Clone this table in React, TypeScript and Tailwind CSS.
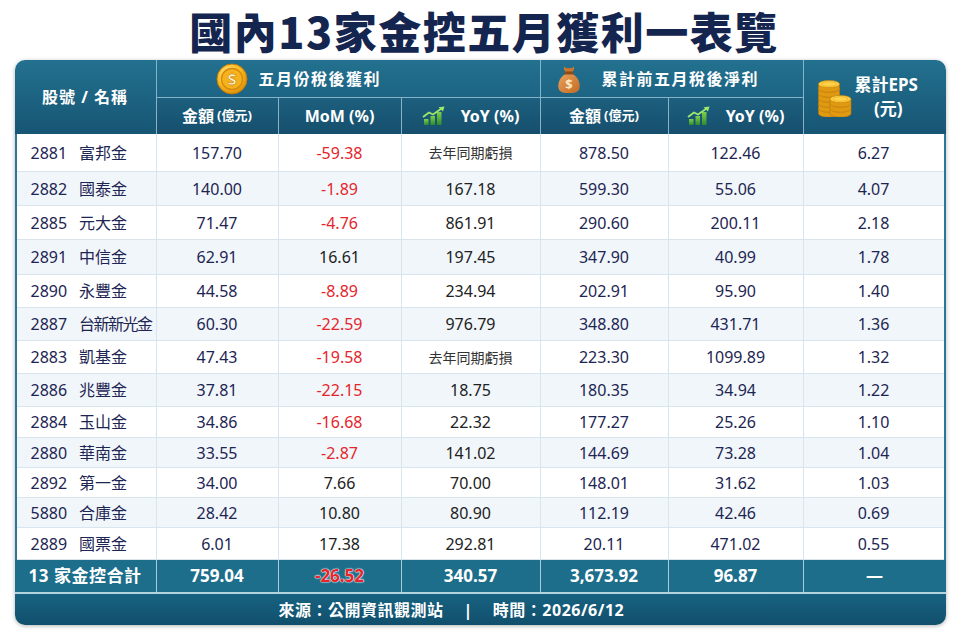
import React from "react";

type Row = {
  code: string;
  name: string;
  amt: string;
  mom: string;
  yoy: string;
  cum: string;
  cumYoy: string;
  eps: string;
  h: string;
};

const rows: Row[] = [
  { code: "2881", name: "富邦金", amt: "157.70", mom: "-59.38", yoy: "去年同期虧損", cum: "878.50", cumYoy: "122.46", eps: "6.27", h: "h-[38px]" },
  { code: "2882", name: "國泰金", amt: "140.00", mom: "-1.89", yoy: "167.18", cum: "599.30", cumYoy: "55.06", eps: "4.07", h: "h-[34px]" },
  { code: "2885", name: "元大金", amt: "71.47", mom: "-4.76", yoy: "861.91", cum: "290.60", cumYoy: "200.11", eps: "2.18", h: "h-[34px]" },
  { code: "2891", name: "中信金", amt: "62.91", mom: "16.61", yoy: "197.45", cum: "347.90", cumYoy: "40.99", eps: "1.78", h: "h-[35px]" },
  { code: "2890", name: "永豐金", amt: "44.58", mom: "-8.89", yoy: "234.94", cum: "202.91", cumYoy: "95.90", eps: "1.40", h: "h-[33px]" },
  { code: "2887", name: "台新新光金", amt: "60.30", mom: "-22.59", yoy: "976.79", cum: "348.80", cumYoy: "431.71", eps: "1.36", h: "h-[33px]" },
  { code: "2883", name: "凱基金", amt: "47.43", mom: "-19.58", yoy: "去年同期虧損", cum: "223.30", cumYoy: "1099.89", eps: "1.32", h: "h-[33px]" },
  { code: "2886", name: "兆豐金", amt: "37.81", mom: "-22.15", yoy: "18.75", cum: "180.35", cumYoy: "34.94", eps: "1.22", h: "h-[33px]" },
  { code: "2884", name: "玉山金", amt: "34.86", mom: "-16.68", yoy: "22.32", cum: "177.27", cumYoy: "25.26", eps: "1.10", h: "h-[31px]" },
  { code: "2880", name: "華南金", amt: "33.55", mom: "-2.87", yoy: "141.02", cum: "144.69", cumYoy: "73.28", eps: "1.04", h: "h-[30px]" },
  { code: "2892", name: "第一金", amt: "34.00", mom: "7.66", yoy: "70.00", cum: "148.01", cumYoy: "31.62", eps: "1.03", h: "h-[30px]" },
  { code: "5880", name: "合庫金", amt: "28.42", mom: "10.80", yoy: "80.90", cum: "112.19", cumYoy: "42.46", eps: "0.69", h: "h-[30px]" },
  { code: "2889", name: "國票金", amt: "6.01", mom: "17.38", yoy: "292.81", cum: "20.11", cumYoy: "471.02", eps: "0.55", h: "h-[32px]" },
];

function Coin() {
  return (
    <svg width="32" height="32" viewBox="0 0 32 32">
      <defs>
        <radialGradient id="coinG" cx="38%" cy="32%" r="75%">
          <stop offset="0" stopColor="#ffe889" />
          <stop offset="0.55" stopColor="#f9bb22" />
          <stop offset="1" stopColor="#d98806" />
        </radialGradient>
      </defs>
      <circle cx="16" cy="16" r="15" fill="url(#coinG)" stroke="#c47a05" strokeWidth="1" />
      <circle cx="16" cy="16" r="10.5" fill="#f6b21c" stroke="#d58b0c" strokeWidth="1.4" />
      <text x="16" y="21.5" textAnchor="middle" fontSize="16" fontWeight="700" fill="#fff6d2" stroke="#d08609" strokeWidth="0.6" fontFamily="Noto Sans, sans-serif">$</text>
    </svg>
  );
}

function Bag() {
  return (
    <svg width="26" height="30" viewBox="0 0 26 30">
      <defs>
        <linearGradient id="bagG" x1="0" y1="0" x2="1" y2="1">
          <stop offset="0" stopColor="#eba35a" />
          <stop offset="1" stopColor="#c26a24" />
        </linearGradient>
      </defs>
      <path d="M8 2.5 C9.5 4 11 4.5 13 4 C15 4.5 16.5 4 18 2.5 C18.5 5 17.5 7 16.5 8 L9.5 8 C8.5 7 7.5 5 8 2.5 Z" fill="#c9762e" />
      <path d="M9.5 10 C3 13.5 1 21 3 25.5 C4.5 28.5 8 29 13 29 C18 29 21.5 28.5 23 25.5 C25 21 23 13.5 16.5 10 Z" fill="url(#bagG)" />
      <rect x="8.5" y="7.5" width="9" height="3" rx="1.4" fill="#8f4a16" />
      <text x="13" y="25" textAnchor="middle" fontSize="13" fontWeight="700" fill="#fde7c4" fontFamily="Noto Sans, sans-serif">$</text>
    </svg>
  );
}

function Chart() {
  return (
    <svg width="24" height="20" viewBox="0 0 24 20">
      <defs>
        <linearGradient id="barG" x1="0" y1="0" x2="0" y2="1">
          <stop offset="0" stopColor="#7fd04a" />
          <stop offset="1" stopColor="#2c8a2f" />
        </linearGradient>
      </defs>
      <rect x="2" y="13" width="4.5" height="6" fill="url(#barG)" />
      <rect x="8.5" y="10" width="4.5" height="9" fill="url(#barG)" />
      <rect x="15" y="6" width="4.5" height="13" fill="url(#barG)" />
      <polyline points="1,11 7,6.5 11,8.5 19.5,2.5" fill="none" stroke="#9de86a" strokeWidth="1.8" strokeLinejoin="round" />
      <polygon points="22.5,0.5 16.5,1.2 21,5.5" fill="#9de86a" />
    </svg>
  );
}

function CoinPiece({ cx, y }: { cx: number; y: number }) {
  const rx = 10.5;
  const ry = 3.6;
  return (
    <g>
      <path
        d={`M${cx - rx} ${y} v4.6 a${rx} ${ry} 0 0 0 ${2 * rx} 0 v-4.6 z`}
        fill="#e09a12"
        stroke="#b87408"
        strokeWidth="0.6"
      />
      <ellipse cx={cx} cy={y} rx={rx} ry={ry} fill="#ffd34a" stroke="#c8840a" strokeWidth="0.6" />
      <ellipse cx={cx} cy={y} rx={rx - 3} ry={ry - 1.3} fill="none" stroke="#eaa91f" strokeWidth="0.7" />
    </g>
  );
}

function CoinStack() {
  const left = [32, 27, 22, 17, 12, 7];
  const right = [32, 27, 22];
  return (
    <svg width="36" height="40" viewBox="0 0 36 40">
      {left.map((y) => (
        <CoinPiece key={"l" + y} cx={12} y={y} />
      ))}
      {right.map((y) => (
        <CoinPiece key={"r" + y} cx={23.5} y={y} />
      ))}
    </svg>
  );
}

export default function App() {
  return (
    <div className="w-[960px] h-[640px] bg-white font-['Noto_Sans','Noto_Sans_CJK_TC',sans-serif]">
      <div className="h-[60px] flex items-center justify-center pl-[8px]">
        <h1 className="text-[43px] leading-[60px] font-black tracking-[1.5px] text-[#14264f] font-['Noto_Sans_CJK_TC','Noto_Sans',sans-serif]">
          國內13家金控五月獲利一表覽
        </h1>
      </div>

      <div className="w-[931px] mx-auto rounded-[10px] overflow-hidden shadow-[0_1px_4px_rgba(0,0,0,0.3)]">
        {/* Header */}
        <div className="grid grid-cols-[142px_122px_123px_139px_128px_135px_142px] grid-rows-[38px_36px] text-white font-bold font-['Noto_Sans','Noto_Sans_CJK_TC',sans-serif]">
          <div className="row-span-2 flex items-center justify-center border-r border-[#86b3c7] bg-linear-to-b from-[#23718f] to-[#175574] text-[16px] tracking-[1px]">
            股號 / 名稱
          </div>
          <div className="col-span-3 flex items-center justify-start pl-[59px] gap-[11px] border-r border-b border-[#86b3c7] bg-linear-to-b from-[#23718f] to-[#1d6484]">
            <Coin />
            <span className="text-[16px] tracking-[1.5px]">五月份稅後獲利</span>
          </div>
          <div className="col-span-2 flex items-center justify-start pl-[15px] gap-[20px] border-r border-b border-[#86b3c7] bg-linear-to-b from-[#23718f] to-[#1d6484]">
            <Bag />
            <span className="text-[16px] tracking-[1.5px]">累計前五月稅後淨利</span>
          </div>
          <div className="row-span-2 flex items-center justify-start pl-[13px] gap-[2px] bg-linear-to-b from-[#23718f] to-[#175574]">
            <CoinStack />
            <div className="flex flex-col items-center leading-[24px]">
              <span className="text-[17px]">累計EPS</span>
              <span className="text-[17px] pl-[4px]">(元)</span>
            </div>
          </div>

          <div className="flex items-center justify-center gap-[3px] border-r border-[#86b3c7] bg-linear-to-b from-[#1c5f7e] to-[#164f6d]">
            <span className="text-[16px]">金額</span>
            <span className="text-[13px]">(億元)</span>
          </div>
          <div className="flex items-center justify-center border-r border-[#86b3c7] bg-linear-to-b from-[#1c5f7e] to-[#164f6d] text-[16px]">
            MoM (%)
          </div>
          <div className="flex items-center justify-center gap-[15px] border-r border-[#86b3c7] bg-linear-to-b from-[#1c5f7e] to-[#164f6d] text-[16px]">
            <Chart />
            <span>YoY (%)</span>
          </div>
          <div className="flex items-center justify-center gap-[3px] border-r border-[#86b3c7] bg-linear-to-b from-[#1c5f7e] to-[#164f6d]">
            <span className="text-[16px]">金額</span>
            <span className="text-[13px]">(億元)</span>
          </div>
          <div className="flex items-center justify-center gap-[15px] border-r border-[#86b3c7] bg-linear-to-b from-[#1c5f7e] to-[#164f6d] text-[16px]">
            <Chart />
            <span>YoY (%)</span>
          </div>
        </div>

        {/* Body */}
        <div className="border-x-2 border-[#2c7698] text-[16px]">
          {rows.map((r, i) => {
            const red = r.mom.startsWith("-");
            const loss = r.yoy === "去年同期虧損";
            const long = r.name.length > 3;
            return (
              <div
                key={r.code}
                className={`grid grid-cols-[140px_122px_123px_139px_128px_135px_140px] border-b border-[#d8e4ee] ${r.h} ${i % 2 === 1 ? "bg-[#f1f6fa]" : "bg-white"}`}
              >
                <div className="flex items-center justify-start pl-[14px] gap-[12px] border-r border-[#d8e4ee] text-[#1d2553] whitespace-nowrap">
                  <span>{r.code}</span>
                  <span className={long ? "tracking-[-1.5px]" : ""}>{r.name}</span>
                </div>
                <div className="flex items-center justify-center border-r border-[#d8e4ee] text-[#1d2553]">{r.amt}</div>
                <div className={`flex items-center justify-center border-r border-[#d8e4ee] ${red ? "text-[#e5252b]" : "text-[#222222]"}`}>
                  {r.mom}
                </div>
                <div className={`flex items-center justify-center border-r border-[#d8e4ee] ${loss ? "text-[14px] text-[#333333]" : "text-[#222222]"}`}>
                  {r.yoy}
                </div>
                <div className="flex items-center justify-center border-r border-[#d8e4ee] text-[#1d2553]">{r.cum}</div>
                <div className="flex items-center justify-center border-r border-[#d8e4ee] text-[#1d2553]">{r.cumYoy}</div>
                <div className="flex items-center justify-center text-[#1d2553]">{r.eps}</div>
              </div>
            );
          })}
        </div>

        {/* Total */}
        <div className="grid grid-cols-[142px_122px_123px_139px_128px_135px_142px] h-[34px] bg-[#1c6e8b] border-b-2 border-[#b6d3e0] text-white font-bold text-[17px]">
          <div className="flex items-center justify-center border-r border-[#a9cbda] tracking-[0.5px]">13 家金控合計</div>
          <div className="flex items-center justify-center border-r border-[#a9cbda]">759.04</div>
          <div className="flex items-center justify-center border-r border-[#a9cbda] text-[#e5252b] [text-shadow:0_0_2px_#ffffff,0_0_1px_#ffffff,0_0_1px_#ffffff]">
            -26.52
          </div>
          <div className="flex items-center justify-center border-r border-[#a9cbda]">340.57</div>
          <div className="flex items-center justify-center border-r border-[#a9cbda]">3,673.92</div>
          <div className="flex items-center justify-center border-r border-[#a9cbda]">96.87</div>
          <div className="flex items-center justify-center">—</div>
        </div>

        {/* Footer */}
        <div className="h-[31px] flex items-center justify-start pl-[264px] gap-[20px] bg-linear-to-b from-[#176381] to-[#114f6c] text-white font-bold text-[16px] tracking-[0.5px]">
          <span>來源：公開資訊觀測站</span>
          <span>|</span>
          <span>時間：2026/6/12</span>
        </div>
      </div>
    </div>
  );
}
